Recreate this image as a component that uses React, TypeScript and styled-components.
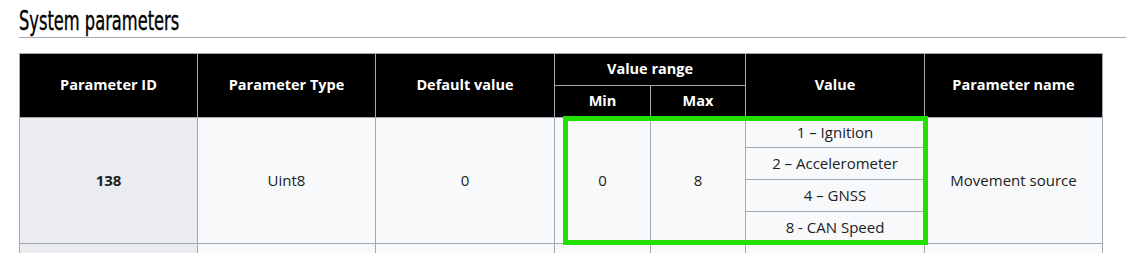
import React from "react";
import styled, { createGlobalStyle } from "styled-components";

const GlobalStyle = createGlobalStyle`
  body {
    margin: 0;
    background: #ffffff;
    font-family: "Open Sans", "DejaVu Sans", sans-serif;
    color: #202122;
  }
`;

const movementValues = [
  "1 – Ignition",
  "2 – Accelerometer",
  "4 – GNSS",
  "8 - CAN Speed",
];

export default function App() {
  return (
    <>
      <GlobalStyle />
      <Page>
        <Heading>
          <HeadingText>System parameters</HeadingText>
        </Heading>
        <TableWrap>
          <ParamTable>
            <colgroup>
              <col style={{ width: 178 }} />
              <col style={{ width: 178 }} />
              <col style={{ width: 179 }} />
              <col style={{ width: 96 }} />
              <col style={{ width: 95 }} />
              <col style={{ width: 179 }} />
              <col style={{ width: 178 }} />
            </colgroup>
            <thead>
              <tr>
                <HeadCell rowSpan={2}>Parameter ID</HeadCell>
                <HeadCell rowSpan={2}>Parameter Type</HeadCell>
                <HeadCell rowSpan={2}>Default value</HeadCell>
                <HeadCell colSpan={2}>Value range</HeadCell>
                <HeadCell rowSpan={2}>Value</HeadCell>
                <HeadCell rowSpan={2}>Parameter name</HeadCell>
              </tr>
              <tr>
                <HeadCell>Min</HeadCell>
                <HeadCell>Max</HeadCell>
              </tr>
            </thead>
            <tbody>
              {movementValues.map((v, i) => (
                <tr key={v}>
                  {i === 0 && (
                    <>
                      <IdCell rowSpan={4}>138</IdCell>
                      <Cell rowSpan={4}>Uint8</Cell>
                      <Cell rowSpan={4}>0</Cell>
                      <Cell rowSpan={4}>0</Cell>
                      <Cell rowSpan={4}>8</Cell>
                    </>
                  )}
                  <ValueCell $first={i === 0}>{v}</ValueCell>
                  {i === 0 && <Cell rowSpan={4}>Movement source</Cell>}
                </tr>
              ))}
              <tr>
                <IdCell />
                <Cell />
                <Cell />
                <Cell />
                <Cell />
                <ValueCell />
                <Cell />
              </tr>
            </tbody>
          </ParamTable>
          <Highlight />
        </TableWrap>
      </Page>
    </>
  );
}

const Page = styled.div`
  padding: 8px 0 0 19px;
  height: 253px;
  overflow: hidden;
  box-sizing: border-box;
`;

const Heading = styled.h2`
  margin: 0;
  padding-bottom: 3px;
  border-bottom: 1px solid #a2a9b1;
  font-family: "DejaVu Sans Condensed", "DejaVu Sans", sans-serif;
  font-stretch: condensed;
  font-weight: 400;
  font-size: 27px;
  line-height: 26px;
  color: #000000;
  white-space: nowrap;
`;

// narrow display face for the section title
const HeadingText = styled.span`
  display: inline-block;
  transform: scaleX(0.67);
  transform-origin: left center;
  -webkit-text-stroke: 0.4px #000000;
`;

const TableWrap = styled.div`
  position: relative;
  margin-top: 15px;
  width: 1084px;
`;

const ParamTable = styled.table`
  border-collapse: collapse;
  table-layout: fixed;
  width: 1084px;
  font-size: 15px;
`;

const HeadCell = styled.th`
  background: #000000;
  color: #ffffff;
  font-weight: 700;
  font-size: 14.5px;
  border: 1px solid #a2a9b1;
  height: 28px;
  padding: 0 8px 3px;
  text-align: center;
`;

const Cell = styled.td`
  background: #f8f9fa;
  border: 1px solid #a2a9b1;
  text-align: center;
  padding: 0 8px 2px;
`;

const IdCell = styled(Cell)`
  background: #eaecf0;
  font-weight: 700;
`;

const ValueCell = styled(Cell)<{ $first?: boolean }>`
  height: ${(p) => (p.$first ? 27 : 29)}px;
  padding: 0 4px 2px;
`;

// green frame drawn over the range and value columns
const Highlight = styled.div`
  position: absolute;
  left: 544px;
  top: 63px;
  width: 365px;
  height: 129px;
  border: 5px solid #22e000;
  box-sizing: border-box;
  pointer-events: none;
`;
